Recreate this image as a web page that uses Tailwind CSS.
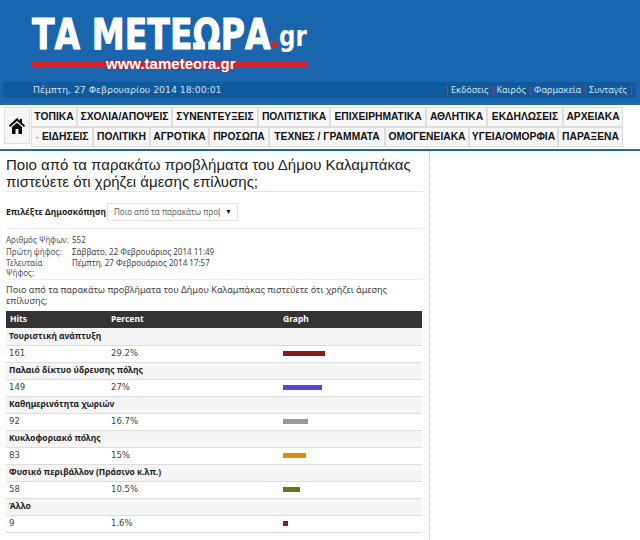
<!DOCTYPE html>
<html lang="el">
<head>
  <meta charset="UTF-8"/>
  <title>Τα Μετέωρα</title>
  <script src="https://cdn.jsdelivr.net/npm/@tailwindcss/browser@4"></script>
</head>
<body class="bg-white text-black font-['Liberation_Sans',sans-serif] overflow-hidden">

  <!-- header -->
  <header class="bg-[#1a66ae] h-[103px] pt-[12px] relative">
    <div class="h-[45px] pl-[32px] flex items-baseline text-white font-['DejaVu_Sans',sans-serif] font-bold leading-[45px]">
      <span class="text-[43px] w-[240px] whitespace-nowrap scale-x-[0.77] origin-left [-webkit-text-stroke:1px_white]">ΤΑ ΜΕΤΕΩΡΑ</span>
      <span class="w-[6px] h-[6px] bg-[#d2232a] self-end mb-[9px]"></span>
      <span class="text-[28px] ml-[1px] scale-x-[0.82] origin-left -translate-y-[3px]">gr</span>
    </div>
    <div class="ml-[32px] w-[276px] h-[6px] mt-[4px] bg-[#d2232a] relative">
      <span class="absolute left-[74px] top-[-6px] text-white font-bold text-[15px] leading-[18px] whitespace-nowrap [text-shadow:0_0_2px_#d2232a,0_0_2px_#d2232a]">www.tameteora.gr</span>
    </div>
    <div class="absolute left-[3px] right-[4px] top-[82px] h-[16px] bg-[#0f5a9c] flex justify-between items-center text-[9.3px] font-['DejaVu_Sans',sans-serif] text-[#cfe0f0]">
      <span class="ml-[30px]">Πέμπτη, 27 Φεβρουαρίου 2014 18:00:01</span>
      <span class="flex gap-[3px] mr-[4px] text-[9px] font-['Noto_Sans',sans-serif]">
        <i class="not-italic text-[#d2235f] w-[2px] flex justify-center">|</i><span>Εκδόσεις</span>
        <i class="not-italic text-[#d2235f] w-[2px] flex justify-center">|</i><span>Καιρός</span>
        <i class="not-italic text-[#d2235f] w-[2px] flex justify-center">|</i><span>Φαρμακεία</span>
        <i class="not-italic text-[#d2235f] w-[2px] flex justify-center">|</i><span>Συνταγές</span>
        <i class="not-italic text-[#d2235f] w-[2px] flex justify-center">|</i>
      </span>
    </div>
  </header>

  <!-- menu -->
  <nav class="h-[48px] border-y-2 border-[#1f6f8f] flex pl-[4px] pt-[2px] text-[10.3px] font-bold text-[#111] whitespace-nowrap">
    <div class="w-[26px] h-[37px] bg-[#f5f5f5] border border-[#ddd] flex items-center justify-center">
      <svg width="16" height="16" viewBox="0 0 16 16"><path d="M8 0 L11 2.800 V1 H13 V4.700 L16 7.500 L15 9 L8 3 L1 9 L0 7.500 Z M3 9 L8 4.800 L13 9 V16 H9.500 V11 H6.500 V16 H3 Z" fill="#000"/></svg>
    </div>
    <div class="ml-[1px] flex flex-col">
      <div class="flex h-[20px]">
        <a class="w-[46px] border border-[#ddd] bg-[#f7f7f7] flex items-center justify-center">ΤΟΠΙΚΑ</a>
        <a class="w-[95px] border border-[#ddd] bg-[#f7f7f7] flex items-center justify-center">ΣΧΟΛΙΑ/ΑΠΟΨΕΙΣ</a>
        <a class="w-[86px] border border-[#ddd] bg-[#f7f7f7] flex items-center justify-center">ΣΥΝΕΝΤΕΥΞΕΙΣ</a>
        <a class="w-[72px] border border-[#ddd] bg-[#f7f7f7] flex items-center justify-center">ΠΟΛΙΤΙΣΤΙΚΑ</a>
        <a class="w-[96px] border border-[#ddd] bg-[#f7f7f7] flex items-center justify-center">ΕΠΙΧΕΙΡΗΜΑΤΙΚΑ</a>
        <a class="w-[61px] border border-[#ddd] bg-[#f7f7f7] flex items-center justify-center">ΑΘΛΗΤΙΚΑ</a>
        <a class="w-[76px] border border-[#ddd] bg-[#f7f7f7] flex items-center justify-center">ΕΚΔΗΛΩΣΕΙΣ</a>
        <a class="w-[60px] border border-[#ddd] bg-[#f7f7f7] flex items-center justify-center">ΑΡΧΕΙΑΚΑ</a>
      </div>
      <div class="flex h-[20px]">
        <a class="w-[62px] border border-[#ddd] bg-[#f7f7f7] flex items-center justify-center gap-[3px]"><span class="text-[#aaa]">-</span>ΕΙΔΗΣΕΙΣ</a>
        <a class="w-[57px] border border-[#ddd] bg-[#f7f7f7] flex items-center justify-center">ΠΟΛΙΤΙΚΗ</a>
        <a class="w-[59px] border border-[#ddd] bg-[#f7f7f7] flex items-center justify-center">ΑΓΡΟΤΙΚΑ</a>
        <a class="w-[60px] border border-[#ddd] bg-[#f7f7f7] flex items-center justify-center">ΠΡΟΣΩΠΑ</a>
        <a class="w-[116px] border border-[#ddd] bg-[#f7f7f7] flex items-center justify-center">ΤΕΧΝΕΣ / ΓΡΑΜΜΑΤΑ</a>
        <a class="w-[84px] border border-[#ddd] bg-[#f7f7f7] flex items-center justify-center">ΟΜΟΓΕΝΕΙΑΚΑ</a>
        <a class="w-[89px] border border-[#ddd] bg-[#f7f7f7] flex items-center justify-center">ΥΓΕΙΑ/ΟΜΟΡΦΙΑ</a>
        <a class="w-[65px] border border-[#ddd] bg-[#f7f7f7] flex items-center justify-center">ΠΑΡΑΞΕΝΑ</a>
      </div>
    </div>
  </nav>

  <!-- poll -->
  <main class="w-[430px] h-[389px] border-r border-dotted border-[#bbb] pl-[6px] pr-[7px] font-['Noto_Sans',sans-serif] text-[8.5px] text-[#444]">
    <h1 class="font-['Liberation_Sans',sans-serif] text-[15px] leading-[17px] h-[41px] pt-[5px] text-[#222] border-b border-[#e5e5e5] -mr-[1px]">Ποιο από τα παρακάτω προβλήματα του Δήμου Καλαμπάκας πιστεύετε ότι χρήζει άμεσης επίλυσης;</h1>

    <div class="flex items-center h-[37px] pt-[4px] border-b border-[#eee] -mr-[1px]">
      <b class="text-[#222] w-[101px] whitespace-nowrap">Επιλέξτε Δημοσκόπηση</b>
      <div class="w-[131px] h-[18px] border border-[#e3e3e3] flex items-center justify-between pl-[6px] pr-[5px] text-[8px] text-[#666]">
        <span class="w-[106px] overflow-hidden whitespace-nowrap">Ποιο από τα παρακάτω προβλήματα</span>
        <span class="text-[7px] text-[#111]">▼</span>
      </div>
    </div>

    <dl class="grid grid-cols-[66px_1fr] text-[8px] leading-[9.5px] h-[51px] pt-[6px] border-b border-[#eee] -mr-[1px]">
      <dt class="text-[#555] whitespace-nowrap">Αριθμός Ψήφων:</dt><dd>552</dd>
      <dt class="text-[#555]">Πρώτη ψήφος:</dt><dd>Σάββατο, 22 Φεβρουάριος 2014 11:49</dd>
      <dt class="text-[#555] w-[50px]">Τελευταία Ψήφος:</dt><dd>Πέμπτη, 27 Φεβρουάριος 2014 17:57</dd>
    </dl>

    <p class="text-[9.1px] leading-[11px] h-[31px] pt-[4px] pr-[10px] text-[#444]">Ποιο από τα παρακάτω προβλήματα του Δήμου Καλαμπάκας πιστεύετε ότι χρήζει άμεσης επίλυσης;</p>

    <table class="w-[416px] table-fixed border-collapse">
      <colgroup><col class="w-[105px]"/><col class="w-[172px]"/><col/></colgroup>
      <thead>
        <tr class="h-[17px] bg-[#333] text-white text-left">
          <th class="pl-[4px] font-bold">Hits</th><th class="font-bold">Percent</th><th class="font-bold">Graph</th>
        </tr>
      </thead>
      <tbody class="font-['DejaVu_Sans',sans-serif]">
        <tr class="h-[17px] bg-[#f5f5f5] border-b border-[#ddd]"><td colspan="3" class="pl-[3px] font-bold font-['Noto_Sans',sans-serif] text-[#222] whitespace-nowrap">Τουριστική ανάπτυξη</td></tr>
        <tr class="h-[17px] border-b border-[#ddd]"><td class="pl-[3px]">161</td><td>29.2%</td><td><div class="w-[42px] h-[5px] bg-[#8b1a1a]"></div></td></tr>
        <tr class="h-[17px] bg-[#f5f5f5] border-b border-[#ddd]"><td colspan="3" class="pl-[3px] font-bold font-['Noto_Sans',sans-serif] text-[#222] whitespace-nowrap">Παλαιό δίκτυο ύδρευσης πόλης</td></tr>
        <tr class="h-[17px] border-b border-[#ddd]"><td class="pl-[3px]">149</td><td>27%</td><td><div class="w-[39px] h-[5px] bg-[#5a45d8]"></div></td></tr>
        <tr class="h-[17px] bg-[#f5f5f5] border-b border-[#ddd]"><td colspan="3" class="pl-[3px] font-bold font-['Noto_Sans',sans-serif] text-[#222] whitespace-nowrap">Καθημερινότητα χωριών</td></tr>
        <tr class="h-[17px] border-b border-[#ddd]"><td class="pl-[3px]">92</td><td>16.7%</td><td><div class="w-[25px] h-[5px] bg-[#999]"></div></td></tr>
        <tr class="h-[17px] bg-[#f5f5f5] border-b border-[#ddd]"><td colspan="3" class="pl-[3px] font-bold font-['Noto_Sans',sans-serif] text-[#222] whitespace-nowrap">Κυκλοφοριακό πόλης</td></tr>
        <tr class="h-[17px] border-b border-[#ddd]"><td class="pl-[3px]">83</td><td>15%</td><td><div class="w-[23px] h-[5px] bg-[#d88f0a]"></div></td></tr>
        <tr class="h-[17px] bg-[#f5f5f5] border-b border-[#ddd]"><td colspan="3" class="pl-[3px] font-bold font-['Noto_Sans',sans-serif] text-[#222] whitespace-nowrap">Φυσικό περιβάλλον (Πράσινο κ.λπ.)</td></tr>
        <tr class="h-[17px] border-b border-[#ddd]"><td class="pl-[3px]">58</td><td>10.5%</td><td><div class="w-[17px] h-[5px] bg-[#5c7a1e]"></div></td></tr>
        <tr class="h-[17px] bg-[#f5f5f5] border-b border-[#ddd]"><td colspan="3" class="pl-[3px] font-bold font-['Noto_Sans',sans-serif] text-[#222] whitespace-nowrap">Άλλο</td></tr>
        <tr class="h-[17px] border-b border-[#ddd]"><td class="pl-[3px]">9</td><td>1.6%</td><td><div class="w-[5px] h-[5px] bg-[#8b1a1a]"></div></td></tr>
      </tbody>
    </table>
  </main>
</body>
</html>
